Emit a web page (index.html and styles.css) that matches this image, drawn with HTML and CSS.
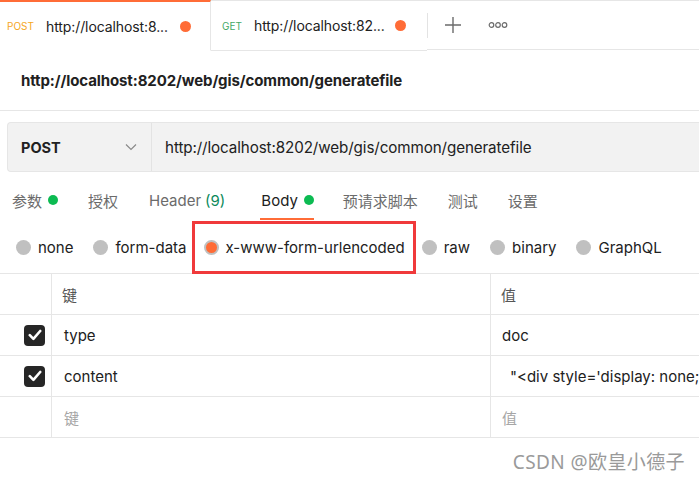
FILE: index.html
```html
<!DOCTYPE html>
<html>
<head>
<meta charset="utf-8">
<link rel="stylesheet" href="styles.css">
</head>
<body>
<div class="page">
  <div class="tabbar">
    <div class="tab active">
      <span class="m post">POST</span>
      <span class="tab-url">http://localhost:8...</span>
      <span class="dot"></span>
    </div>
    <div class="tab second">
      <span class="m get">GET</span>
      <span class="tab-url">http://localhost:82...</span>
      <span class="dot"></span>
    </div>
    <div class="tab-tools">
      <span class="sep"></span>
      <svg class="plus" width="18" height="18" viewBox="0 0 18 18"><path d="M9 1v16M1 9h16" stroke="#6b6b6b" stroke-width="1.4" fill="none"/></svg>
      <svg class="more" width="20" height="8" viewBox="0 0 20 8"><circle cx="3.5" cy="4" r="2.3" stroke="#6b6b6b" stroke-width="1.2" fill="none"/><circle cx="10" cy="4" r="2.3" stroke="#6b6b6b" stroke-width="1.2" fill="none"/><circle cx="16.5" cy="4" r="2.3" stroke="#6b6b6b" stroke-width="1.2" fill="none"/></svg>
    </div>
  </div>

  <div class="title">http://localhost:8202/web/gis/common/generatefile</div>

  <div class="urlbar">
    <div class="method">
      <span>POST</span>
      <svg width="12" height="8" viewBox="0 0 12 8"><path d="M1 1.5l5 5 5-5" stroke="#8a8a8a" stroke-width="1.2" fill="none"/></svg>
    </div>
    <div class="url">http://localhost:8202/web/gis/common/generatefile</div>
  </div>

  <div class="reqtabs">
    <span class="rt">参数<i class="gdot"></i></span>
    <span class="rt">授权</span>
    <span class="rt">Header <em>(9)</em></span>
    <span class="rt on">Body<i class="gdot"></i></span>
    <span class="rt">预请求脚本</span>
    <span class="rt">测试</span>
    <span class="rt">设置</span>
  </div>

  <div class="radios">
    <span class="r"><i class="circ"></i>none</span>
    <span class="r"><i class="circ"></i>form-data</span>
    <span class="r sel"><i class="circ"></i>x-www-form-urlencoded</span>
    <span class="r"><i class="circ"></i>raw</span>
    <span class="r"><i class="circ"></i>binary</span>
    <span class="r"><i class="circ"></i>GraphQL</span>
  </div>

  <div class="table">
    <div class="row head">
      <div class="c0"></div>
      <div class="c1">键</div>
      <div class="c2">值</div>
    </div>
    <div class="row">
      <div class="c0"><span class="cb"><svg width="14" height="12" viewBox="0 0 14 12"><path d="M1.8 6.2l3.6 3.6L12.2 2" stroke="#fff" stroke-width="2.6" fill="none" stroke-linecap="round" stroke-linejoin="round"/></svg></span></div>
      <div class="c1">type</div>
      <div class="c2">doc</div>
    </div>
    <div class="row">
      <div class="c0"><span class="cb"><svg width="14" height="12" viewBox="0 0 14 12"><path d="M1.8 6.2l3.6 3.6L12.2 2" stroke="#fff" stroke-width="2.6" fill="none" stroke-linecap="round" stroke-linejoin="round"/></svg></span></div>
      <div class="c1">content</div>
      <div class="c2 long">"&lt;div style='display: none;</div>
    </div>
    <div class="row">
      <div class="c0"></div>
      <div class="c1 ph">键</div>
      <div class="c2 ph">值</div>
    </div>
  </div>

  <div class="footer">
    <span class="wm">CSDN @欧皇小德子</span>
  </div>
</div>
</body>
</html>
```

FILE: styles.css
```css
* { box-sizing: border-box; }
html, body { margin: 0; padding: 0; background: #fff; }
body {
  width: 699px;
  height: 481px;
  overflow: hidden;
  font-family: Inter, "Noto Sans CJK SC", sans-serif;
  color: #212121;
}
.page { width: 699px; }

.tabbar {
  display: flex;
  height: 50px;
  border-top: 1px solid #e6e6e6;
}
.tab {
  display: flex;
  align-items: center;
  height: 50px;
  border-bottom: 1px solid #e6e6e6;
  border-right: 1px solid #e6e6e6;
}
.tab.active {
  width: 211px;
  margin-top: -1px;
  height: 51px;
  border-top: 2px solid #ff6c37;
  border-bottom: 1px solid #fff;
  padding-left: 7px;
}
.tab.second {
  width: 216px;
  border-right: none;
  padding-left: 11px;
}
.m { font-size: 10px; width: 39px; flex: none; }
.post { color: #f5a623; }
.get { width: 32px; color: #44a866; }
.tab-url { font-size: 14px; color: #212121; letter-spacing: -0.1px; }
.dot {
  width: 11px; height: 11px; border-radius: 50%;
  background: #ff6c37; margin-left: auto; margin-right: 19px;
}
.tab.second .dot { margin-right: 21px; }
.tab-tools {
  flex: 1;
  display: flex;
  align-items: center;
  border-bottom: 1px solid #e6e6e6;
}
.sep { width: 1px; height: 25px; background: #e3e3e3; }
.plus { margin-left: 16px; }
.more { margin-left: 26px; }

.title {
  height: 61px;
  display: flex;
  align-items: center;
  padding-left: 21px;
  font-size: 15px;
  font-weight: 700;
  color: #212121;
  border-bottom: 1px solid #e6e6e6;
  letter-spacing: -0.1px;
}

.urlbar {
  margin: 11px 0 0 7px;
  height: 50px;
  display: flex;
  background: #f2f2f2;
  border: 1px solid #e6e6e6;
  border-right: none;
  border-radius: 4px 0 0 4px;
}
.method {
  width: 144px;
  display: flex;
  align-items: center;
  justify-content: space-between;
  padding: 0 14px 0 13px;
  border-right: 1px solid #e3e3e3;
  font-weight: 700;
  font-size: 14.5px;
}
.url {
  display: flex;
  align-items: center;
  padding-left: 13px;
  font-size: 15.2px;
  color: #212121;
  letter-spacing: -0.1px;
}

.reqtabs {
  display: flex;
  height: 46px;
  align-items: center;
  padding-left: 12px;
  margin-top: 5px;
}
.rt {
  font-size: 15px;
  color: #6b6b6b;
  position: relative;
  display: flex;
  align-items: center;
  height: 46px;
}
.rt:nth-child(1) { margin-right: 30px; }
.rt:nth-child(2) { margin-right: 31px; }
.rt:nth-child(3) { margin-right: 36px; }
.rt:nth-child(4) { margin-right: 29px; }
.rt:nth-child(5) { margin-right: 30px; }
.rt:nth-child(6) { margin-right: 30px; }
.rt em { font-style: normal; color: #0c8a5b; margin-left: 4px; }
.rt.on { color: #212121; }
.rt.on::after {
  content: "";
  position: absolute;
  left: -1px; right: 0; bottom: 3px;
  height: 2px;
  background: #ff6c37;
}
.gdot {
  width: 10px; height: 10px; border-radius: 50%;
  background: #0cbb52; margin-left: 6px; display: inline-block;
}

.radios {
  display: flex;
  align-items: center;
  height: 48px;
  padding-left: 16px;
}
.r {
  display: flex;
  align-items: center;
  font-size: 15px;
  color: #212121;
  margin-right: 20px;
}
.circ {
  width: 15px; height: 15px; border-radius: 50%;
  background: #c0c0c0; margin-right: 7px; display: inline-block;
}
.r.sel {
  outline: 3px solid #f0393b;
  padding: 0 8px 0 9px;
  margin-left: -12px;
  margin-right: 9px;
  height: 47px;
}
.r.sel .circ {
  background: #ff6c37;
  border: 2px solid #c0c0c0;
}

.table {
  border-top: 1px solid #e6e6e6;
  margin-top: 2px;
}
.row {
  display: flex;
  height: 41px;
  border-bottom: 1px solid #e6e6e6;
}
.row > div { display: flex; align-items: center; font-size: 15px; }
.c0 { width: 52px; border-right: 1px solid #e6e6e6; justify-content: flex-end; padding-right: 6px; }
.c1 { width: 439px; border-right: 1px solid #e6e6e6; padding-left: 12px; }
.c2 { flex: 1; padding-left: 11px; white-space: nowrap; overflow: hidden; }
.row.head .c1, .row.head .c2 { color: #555; padding-left: 10px; }
.c2.long { padding-left: 19px; }
.ph { color: #a6a6a6; }
.cb {
  width: 21px; height: 21px; border-radius: 4px;
  background: #262626;
  display: flex; align-items: center; justify-content: center;
}

.footer {
  display: flex;
  justify-content: flex-end;
  padding: 9px 14px 0 0;
}
.wm {
  font-family: "Noto Sans", "Noto Sans CJK SC", sans-serif;
  font-size: 19px;
  letter-spacing: 0.4px;
  color: #9a9a9a;
}
```
